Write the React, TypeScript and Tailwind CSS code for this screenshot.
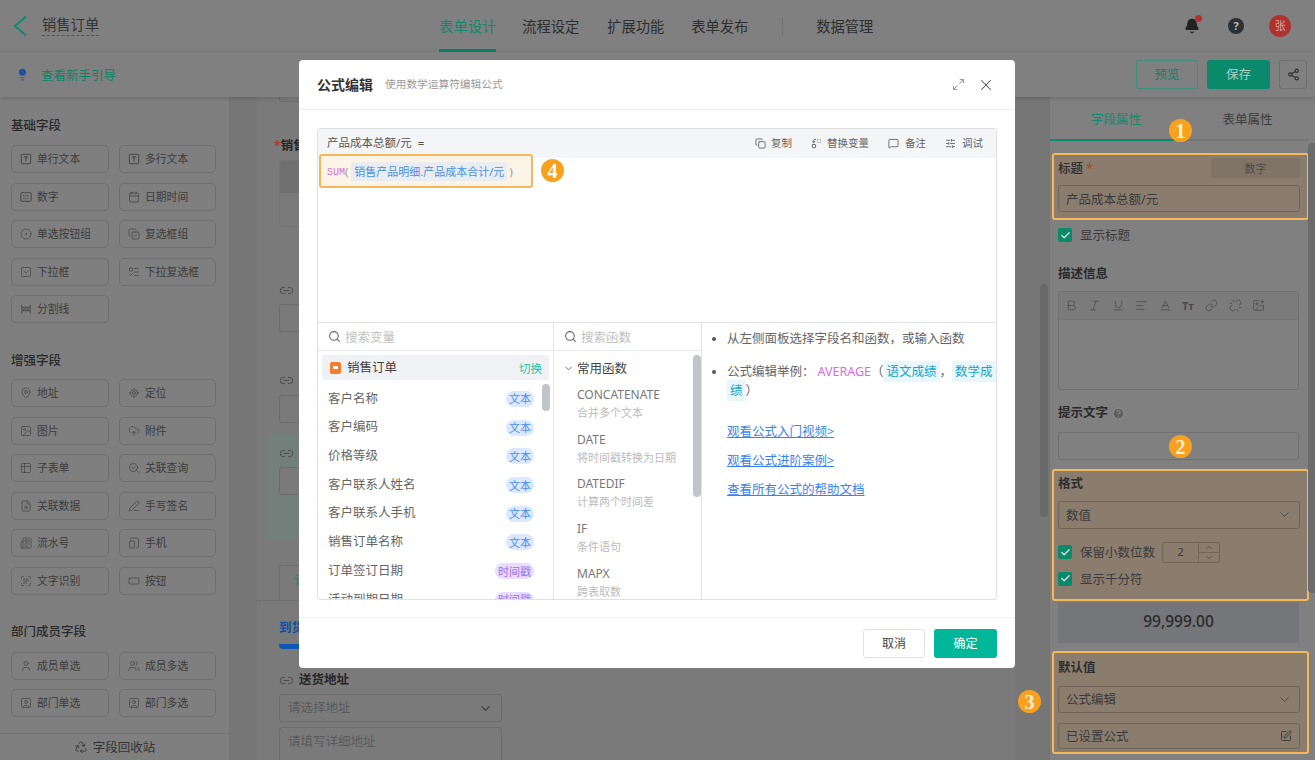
import {
  AlignLeft,
  Baseline,
  Bell,
  Bold,
  Calendar,
  Check,
  ChevronDown,
  ChevronUp,
  CircleDot,
  CircleHelp,
  CloudUpload,
  Copy,
  CopyCheck,
  FileSearch,
  Image,
  ImagePlus,
  Italic,
  Lightbulb,
  Link,
  Link2,
  ListTodo,
  LocateFixed,
  MapPin,
  Maximize2,
  MessageSquare,
  Newspaper,
  PenLine,
  Recycle,
  Replace,
  RectangleHorizontal,
  ScanText,
  Search,
  SearchCheck,
  Share2,
  SlidersHorizontal,
  SquareChevronDown,
  SquarePen,
  SquareUser,
  Table2,
  TabletSmartphone,
  Underline,
  Unlink,
  User,
  Users,
  X,
} from 'lucide-react'
import type { ReactNode } from 'react'

const TextBoxIcon = () => (
  <svg width="12" height="12" viewBox="0 0 14 14" fill="none" stroke="currentColor" strokeWidth="1.1">
    <rect x="1.5" y="1.5" width="11" height="11" rx="1" />
    <path d="M4.5 4.5h5M7 4.5v5.5" />
  </svg>
)

const NumberBoxIcon = () => (
  <svg width="12" height="12" viewBox="0 0 14 14" fill="none" stroke="currentColor" strokeWidth="1.1">
    <rect x="1" y="2" width="12" height="10" rx="1" />
    <path d="M3.5 5.5h7M3.5 8.5h7" strokeDasharray="1.5 1" />
  </svg>
)

const DividerIcon = () => (
  <svg width="12" height="12" viewBox="0 0 14 14" fill="none" stroke="currentColor" strokeWidth="1.1">
    <path d="M2 2v3h10V2M1 7h12M2 12V9h10v3" />
  </svg>
)

const sm = { size: 12, strokeWidth: 1.4 }
const tool = { size: 13, strokeWidth: 1.4 }

const basicFields: [string, ReactNode][] = [
  ['单行文本', <TextBoxIcon />],
  ['多行文本', <TextBoxIcon />],
  ['数字', <NumberBoxIcon />],
  ['日期时间', <Calendar {...sm} />],
  ['单选按钮组', <CircleDot {...sm} />],
  ['复选框组', <CopyCheck {...sm} />],
  ['下拉框', <SquareChevronDown {...sm} />],
  ['下拉复选框', <ListTodo {...sm} />],
  ['分割线', <DividerIcon />],
]

const advancedFields: [string, ReactNode][] = [
  ['地址', <MapPin {...sm} />],
  ['定位', <LocateFixed {...sm} />],
  ['图片', <Image {...sm} />],
  ['附件', <CloudUpload {...sm} />],
  ['子表单', <Table2 {...sm} />],
  ['关联查询', <SearchCheck {...sm} />],
  ['关联数据', <FileSearch {...sm} />],
  ['手写签名', <PenLine {...sm} />],
  ['流水号', <Newspaper {...sm} />],
  ['手机', <TabletSmartphone {...sm} />],
  ['文字识别', <ScanText {...sm} />],
  ['按钮', <RectangleHorizontal {...sm} />],
]

const memberFields: [string, ReactNode][] = [
  ['成员单选', <User {...sm} />],
  ['成员多选', <Users {...sm} />],
  ['部门单选', <SquareUser {...sm} />],
  ['部门多选', <SquareUser {...sm} />],
]

const variables = [
  ['客户名称', '文本'],
  ['客户编码', '文本'],
  ['价格等级', '文本'],
  ['客户联系人姓名', '文本'],
  ['客户联系人手机', '文本'],
  ['销售订单名称', '文本'],
  ['订单签订日期', '时间戳'],
  ['活动到期日期', '时间戳'],
]

const functions = [
  ['CONCATENATE', '合并多个文本'],
  ['DATE', '将时间戳转换为日期'],
  ['DATEDIF', '计算两个时间差'],
  ['IF', '条件语句'],
  ['MAPX', '跨表取数'],
]

const FieldGroup = ({ title, items, top, gap }: { title: string; items: [string, ReactNode][]; top: string; gap: string }) => (
  <div className={top}>
    <h3 className="h-4 text-[12.5px] leading-4 font-medium text-[#2a2a2a]">{title}</h3>
    <div className={`grid grid-cols-[98px_97px] gap-x-[10px] gap-y-[9.5px] ${gap}`}>
      {items.map(([label, icon]) => (
        <div key={label} className="flex h-[28px] items-center gap-[5px] rounded-[5px] border border-[#6f6f6f] pl-[8px] text-[10.8px] text-[#3c3c3c]">
          <span className="text-[#444]">{icon}</span>
          <span className="pt-[1px]">{label}</span>
        </div>
      ))}
    </div>
  </div>
)

const FormLabel = ({ text, className = '' }: { text: string; className?: string }) => (
  <div className={`flex h-[14px] items-center gap-[5px] text-[12.5px] font-bold text-[#262626] ${className}`}>
    <Link2 size={15} strokeWidth={1.6} className="text-[#4c4c4c]" />
    <span className="pt-[1px]">{text}</span>
  </div>
)

const PanelCheck = ({ label }: { label: string }) => (
  <div className="flex items-center gap-[8px] text-[12.5px] text-[#3a3a3a]">
    <span className="flex h-[14px] w-[14px] items-center justify-center rounded-[2px] bg-[#0b8a6b]">
      <Check size={11} strokeWidth={3} className="text-[#d9d9d9]" />
    </span>
    <span className="pt-[2px]">{label}</span>
  </div>
)

const Marker = ({ n, className }: { n: string; className: string }) => (
  <span className={`absolute z-10 flex h-[23px] w-[23px] items-center justify-center rounded-full bg-[#f7a11f] font-['Liberation_Serif',serif] text-[20px] font-bold text-[#fdeed6] ${className}`}>
    {n}
  </span>
)

const Spotlight = ({ className, children }: { className: string; children: ReactNode }) => (
  <div className={`ml-[2px] w-[257px] rounded-[3px] border-2 border-[#f4b75a] bg-[#8a7d6e] pl-[4px] pr-[7px] ${className}`}>{children}</div>
)

const dimInput = 'flex items-center rounded-[3px] border border-[#6f6659] pl-[7px] pr-[7px] pt-[3px] text-[12.5px] text-[#3a3a3a]'

const RightPanel = () => (
  <aside className="relative flex w-[266px] shrink-0 border-l border-[#737373] bg-[#808080]">
    <div className="w-[258px]">
      <div className="relative flex h-[44px] border-b-2 border-[#767676] text-[12.5px]">
        <div className="flex h-[44px] w-[126px] items-center justify-center border-b-2 border-[#0b8a6b] pl-[6px] pt-[4px] text-[#0f8a6d]">字段属性</div>
        <div className="flex h-[42px] flex-1 items-center justify-center pl-[11px] pt-[4px] text-[#3c3c3c]">表单属性</div>
      </div>

      <Spotlight className="mt-[12px] h-[67px] pt-[3px]">
        <div className="flex h-[20px] items-center justify-between text-[12.5px] font-medium text-[#2e2e2e]">
          <span className="pt-[2px]">
            标题 <span className="text-[#c0392b]">*</span>
          </span>
          <span className="flex h-[20px] w-[89px] items-center justify-center rounded-[2px] bg-[#807466] text-[11px] font-normal text-[#4a4a4a]">数字</span>
        </div>
        <div className={`mt-[7px] h-[27px] ${dimInput}`}>产品成本总额/元</div>
      </Spotlight>

      <div className="ml-[8px] mt-[8px]">
        <PanelCheck label="显示标题" />
        <div className="mt-[24px] h-[14px] text-[12.5px] font-bold leading-[14px] text-[#2a2a2a]">描述信息</div>
        <div className="mt-[10px] h-[99px] w-[241px] rounded-[3px] border border-[#707070]">
          <div className="flex h-[28px] items-center gap-[10.4px] border-b border-[#747474] bg-[#7b7b7b] pl-[6px] text-[#4a4a4a]">
            <Bold {...tool} />
            <Italic {...tool} />
            <Underline {...tool} />
            <AlignLeft {...tool} />
            <Baseline {...tool} />
            <span className="w-[13px] text-[11px] font-bold leading-[13px]">Tт</span>
            <Link {...tool} />
            <Unlink {...tool} />
            <ImagePlus {...tool} />
          </div>
        </div>
        <div className="mt-[17px] flex h-[14px] items-center gap-[4px] text-[12.5px] font-bold text-[#2a2a2a]">
          提示文字
          <CircleHelp size={13} fill="#5f5f5f" strokeWidth={2} className="text-[#8a8a8a]" />
        </div>
        <div className="mt-[11px] h-[28px] w-[241px] rounded-[3px] border border-[#707070]" />
      </div>

      <Spotlight className="mt-[9px] h-[132px] pt-[5px]">
        <div className="h-[14px] pt-[1px] text-[12.5px] font-bold leading-[14px] text-[#2e2e2e]">格式</div>
        <div className={`mt-[11px] h-[28px] justify-between ${dimInput}`}>
          数值
          <ChevronDown size={15} strokeWidth={1.5} className="-mt-[3px] text-[#4a4a4a]" />
        </div>
        <div className="mt-[13px] flex h-[21px] items-center">
          <PanelCheck label="保留小数位数" />
          <div className="ml-[7px] flex h-[21px] w-[58px] rounded-[3px] border border-[#6f6659] text-[11.5px] text-[#3a3a3a]">
            <span className="flex w-[35px] items-center justify-center">2</span>
            <span className="flex flex-1 flex-col items-center border-l border-[#6f6659] text-[#444]">
              <ChevronUp size={10} className="flex-1" />
              <span className="h-px w-full bg-[#6f6659]" />
              <ChevronDown size={10} className="flex-1" />
            </span>
          </div>
        </div>
        <div className="mt-[9px]">
          <PanelCheck label="显示千分符" />
        </div>
      </Spotlight>

      <div className="ml-[8px] mt-px flex h-[41px] w-[241px] items-center justify-center bg-[#747679] text-[15.5px] font-medium text-[#2a2a2a]">99,999.00</div>

      <Spotlight className="mt-[8px] h-[103px] pt-[7px]">
        <div className="h-[14px] pt-[1px] text-[12.5px] font-bold leading-[14px] text-[#2e2e2e]">默认值</div>
        <div className={`mt-[12px] h-[27px] justify-between ${dimInput}`}>
          公式编辑
          <ChevronDown size={15} strokeWidth={1.5} className="-mt-[3px] text-[#4a4a4a]" />
        </div>
        <div className={`mt-[10px] h-[26px] justify-between ${dimInput}`}>
          已设置公式
          <SquarePen size={12} className="-mt-[3px] text-[#3a3a3a]" />
        </div>
      </Spotlight>
    </div>
    <div className="ml-auto w-[7px] pt-[46px]">
      <div className="h-[450px] w-[7px] rounded-l-[4px] bg-[#6b6b6b]" />
    </div>
    <Marker n="1" className="left-[119px] top-[22px]" />
    <Marker n="2" className="left-[119px] top-[338px]" />
  </aside>
)

const Canvas = () => (
  <main className="flex min-w-0 flex-1 bg-[#767676]">
    <div className="ml-[27px] h-full w-[758px] overflow-hidden bg-[#7a7a7a] pl-[22px]">
      <div className="h-[5px] w-[700px] rounded-b-[3px] border-x border-b border-[#6c6c6c]" />
      <div className="mt-[37px] -ml-[5px] flex h-[14px] items-center text-[12.5px] font-bold text-[#262626]">
        <span className="text-[#b03a2e]">*</span>销售产品明细
      </div>
      <div className="mt-[7px] h-[67px] w-[700px] overflow-hidden rounded-[3px] border border-[#727272]">
        <div className="h-[32px] bg-[#6f6f6f]" />
      </div>
      <FormLabel text="销售产品" className="mt-[56px]" />
      <div className="mt-[7px] h-[28px] w-[300px] rounded-[3px] border border-[#6c6c6c]" />
      <FormLabel text="销售日期" className="mt-[41px]" />
      <div className="mt-[8px] h-[28px] w-[300px] rounded-[3px] border border-[#6c6c6c]" />
      <div className="-ml-[11px] mt-[10px] h-[107px] w-[700px] bg-[#727f7b] pl-[11px] pt-[13px]">
        <FormLabel text="产品成本" />
        <div className="mt-[7px] h-[28px] w-[300px] rounded-[3px] border border-[#6c6c6c] bg-[#7a7a7a]" />
      </div>
      <div className="-ml-[22px] mt-[25px] flex h-[36px] w-[758px] border-b border-[#6f6f6f]">
        <div className="ml-[22px] h-[36px] w-[100px] rounded-t-[3px] border-x border-t border-[#6f6f6f] pl-[14px] pt-[9px] text-[12.5px] text-[#0f8a6d]">详情</div>
      </div>
      <div className="mt-[20px] text-[12.5px] font-bold leading-[14px] text-[#0f4fa8]">到货信息</div>
      <div className="mt-[9px] h-[5px] w-[60px] rounded-b-[4px] bg-[#0f58b5]" />
      <FormLabel text="送货地址" className="mt-[24px]" />
      <div className="mt-[7px] flex h-[28px] w-[223px] items-center justify-between rounded-[3px] border border-[#6c6c6c] px-[8px] text-[12.5px] text-[#5a5a5a]">
        请选择地址
        <ChevronDown size={15} strokeWidth={2} className="text-[#3e3e3e]" />
      </div>
      <div className="mt-[5px] h-[60px] w-[223px] rounded-[3px] border border-[#6c6c6c] px-[8px] pt-[8px] text-[12.5px] text-[#5a5a5a]">请填写详细地址</div>
    </div>
    <div className="ml-auto w-[9px] pt-[187px]">
      <div className="h-[233px] w-[8px] rounded-[4px] bg-[#696969]" />
    </div>
  </main>
)

const FormulaModal = () => (
  <div className="absolute left-[299px] top-[60px] z-20 flex h-[608px] w-[716px] flex-col rounded-[4px] bg-white">
    <header className="flex h-[50px] shrink-0 items-center border-b border-[#eeeeee] pl-[18px] pr-[20px]">
      <h2 className="text-[14px] font-bold text-[#333]">公式编辑</h2>
      <span className="ml-[12px] text-[10.7px] text-[#9a9a9a]">使用数学运算符编辑公式</span>
      <Maximize2 size={13} strokeWidth={1.5} className="ml-auto text-[#777]" />
      <X size={18} strokeWidth={1.4} className="ml-[12px] text-[#555]" />
    </header>

    <div className="relative mx-[18px] mt-[18px] flex h-[472px] flex-col overflow-hidden rounded-[3px] border border-[#dfe0e2]">
      <div className="flex h-[29px] shrink-0 items-center justify-between bg-[#f4f5f7] pl-[9px] pr-[13px] text-[11.5px] text-[#555]">
        <span className="-mt-[1px]">产品成本总额/元&nbsp; =</span>
        <div className="flex text-[10.5px] text-[#666]">
          <span className="flex items-center gap-[5px]">
            <Copy size={11} />
            复制
          </span>
          <span className="ml-[19px] flex items-center gap-[5px]">
            <Replace size={11} />
            替换变量
          </span>
          <span className="ml-[19px] flex items-center gap-[6px]">
            <MessageSquare size={11} />
            备注
          </span>
          <span className="ml-[19px] flex items-center gap-[6px]">
            <SlidersHorizontal size={11} />
            调试
          </span>
        </div>
      </div>
      <div className="h-[165px] shrink-0 border-b border-[#e2e3e5]" />

      <div className="flex min-h-0 flex-1">
        <section className="relative w-[236px] shrink-0 overflow-hidden border-r border-[#e2e3e5]">
          <div className="flex h-[28px] items-center gap-[4px] border-b border-[#e8e9eb] pl-[10px] text-[12.5px] text-[#c0c0c0]">
            <Search size={13} className="text-[#666]" />
            <span className="pt-[3px]">搜索变量</span>
          </div>
          <div className="mx-[4px] mt-[4px] flex h-[25px] items-center rounded-[2px] bg-[#f0f1f5] pl-[8px] pr-[7px] text-[12.5px] text-[#444]">
            <span className="mr-[6px] flex h-[12px] w-[11px] items-center justify-center rounded-[2px] bg-[#f57c2c]">
              <span className="h-[3px] w-[5px] bg-white" />
            </span>
            <span className="pt-[2px]">销售订单</span>
            <span className="ml-auto pt-[2px] text-[11.5px] text-[#2cc29f]">切换</span>
          </div>
          <ul className="mt-[4.6px]">
            {variables.map(([name, type]) => (
              <li key={name} className="flex h-[28.7px] items-center justify-between pl-[10px] pr-[19px] text-[12.5px] text-[#666]">
                {name}
                <span
                  className={
                    type === '文本'
                      ? 'flex h-[16px] w-[28px] items-center justify-center rounded-full bg-[#dbe8ff] text-[11px] text-[#4a8cf0]'
                      : 'flex h-[16px] w-[39px] items-center justify-center rounded-full bg-[#e9dcff] text-[11px] text-[#9b6fe8]'
                  }
                >
                  {type}
                </span>
              </li>
            ))}
          </ul>
          <div className="absolute left-[224px] top-[61px] h-[27px] w-[8px] rounded-full bg-[#c1c4c8]" />
        </section>

        <section className="relative w-[148px] shrink-0 overflow-hidden border-r border-[#e2e3e5]">
          <div className="flex h-[28px] items-center gap-[4px] border-b border-[#e8e9eb] pl-[10px] text-[12.5px] text-[#c0c0c0]">
            <Search size={13} className="text-[#666]" />
            <span className="pt-[3px]">搜索函数</span>
          </div>
          <div className="mt-[4px] flex h-[26px] items-center gap-[3px] pl-[9px] text-[12.5px] text-[#444]">
            <ChevronDown size={11} className="text-[#666]" />
            <span className="pt-[2px]">常用函数</span>
          </div>
          <ul className="mt-[5px] pl-[23px]">
            {functions.map(([name, desc]) => (
              <li key={name} className="h-[44.7px]">
                <div className="h-[18px] text-[12px] leading-[18px] text-[#777]">{name}</div>
                <div className="h-[18px] text-[11px] leading-[18px] text-[#bbbbbb]">{desc}</div>
              </li>
            ))}
          </ul>
          <div className="absolute right-0 top-[32px] h-[142px] w-[8px] rounded-full bg-[#c1c4c8]" />
        </section>

        <section className="min-w-0 flex-1 pl-[25px] pt-[6px] text-[12.5px] text-[#666]">
          <ul className="list-disc marker:text-[#555]">
            <li className="leading-[19px]">从左侧面板选择字段名和函数，或输入函数</li>
            <li className="mt-[14px] leading-[19px]">
              公式编辑举例：
              <span className="ml-[3px] text-[#d66be8]">AVERAGE</span>
              <span>（</span>
              <span className="bg-[#e8f7fb] px-[3px] py-[2px] text-[#17a5c8]">语文成绩</span>，
              <span className="bg-[#e8f7fb] px-[3px] py-[2px] text-[#17a5c8] [box-decoration-break:clone]">数学成绩</span>）
            </li>
          </ul>
          <div className="mt-[23px] flex flex-col items-start gap-[11px] leading-[18px] text-[#3b82f0] underline">
            <span>观看公式入门视频&gt;</span>
            <span>观看公式进阶案例&gt;</span>
            <span>查看所有公式的帮助文档</span>
          </div>
        </section>
      </div>

      {/* formula highlight, sits over the editor header */}
      <div className="absolute left-px top-[25px] flex h-[34px] w-[214px] items-center rounded-[3px] border-2 border-[#f4b75a] bg-[#fdf3e7] pl-[6px] text-[11px]">
        <span className="pt-[3px] font-['Liberation_Mono',monospace] text-[10px] text-[#d96fd9]">SUM</span>
        <span className="text-[#999]">(</span>
        <span className="ml-[3px] rounded-[3px] bg-[#e9ecf1] px-[3px] py-[4px] text-[#4a90e2]">销售产品明细.产品成本合计/元</span>
        <span className="ml-[2px] text-[#999]">)</span>
      </div>
      <Marker n="4" className="left-[223px] top-[30px] !text-white" />
    </div>

    <footer className="mt-[17px] flex h-[51px] items-start justify-end gap-[9px] border-t border-[#f0f0f0] pr-[18px] pt-[11px] text-[12px]">
      <button className="h-[29px] w-[62px] rounded-[3px] border border-[#e2e2e2] pt-[1px] text-[#444]">取消</button>
      <button className="h-[29px] w-[63px] rounded-[3px] bg-[#00b899] pt-[1px] text-white">确定</button>
    </footer>
  </div>
)

export default function App() {
  return (
    <div className="relative flex h-[760px] w-[1315px] flex-col overflow-hidden bg-[#808080] font-['Noto_Sans','Noto_Sans_CJK_SC',sans-serif] leading-none">
      <header className="flex h-[52px] shrink-0 items-center border-b border-[#7a7a7a] pl-[13px]">
        <svg width="14" height="22" viewBox="0 0 14 22" fill="none" stroke="#0f8a6d" strokeWidth="2">
          <path d="M13 1.5 2 11l11 9.5" />
        </svg>
        <span className="ml-[15px] mt-[3px] border-b border-dashed border-[#555] pb-[2px] text-[14.3px] text-[#333]">销售订单</span>
        <nav className="ml-[340px] flex h-full items-center whitespace-nowrap pt-[3px] text-[14.3px] text-[#2e2e2e]">
          <span className="relative flex h-full w-[57px] items-center justify-center text-[#0f8a6d]">
            表单设计
            <span className="absolute -bottom-[1px] left-0 h-[3px] w-full bg-[#0b7d62]" />
          </span>
          <span className="ml-[26px] w-[58px]">流程设定</span>
          <span className="ml-[27px] w-[57px]">扩展功能</span>
          <span className="ml-[27px] w-[57px]">表单发布</span>
          <span className="ml-[34px] h-[18px] w-px bg-[#707070]" />
          <span className="ml-[33px] w-[58px]">数据管理</span>
        </nav>
        <div className="relative ml-[310px]">
          <Bell size={16} fill="#222" className="text-[#222]" />
          <span className="absolute -right-[2px] -top-[3px] h-[7px] w-[7px] rounded-full bg-[#b5302c]" />
        </div>
        <span className="ml-[28px] flex h-[16px] w-[16px] items-center justify-center rounded-full bg-[#2b2f36] text-[11px] font-bold text-[#bbb]">?</span>
        <span className="ml-[25px] flex h-[22px] w-[22px] items-center justify-center rounded-full bg-[#b0322f] text-[11px] text-[#d9a5a3]">张</span>
      </header>

      <div className="z-[1] flex h-[45px] shrink-0 items-center pl-[16px] pr-[8px] shadow-[0_2px_3px_rgba(0,0,0,0.12)]">
        <Lightbulb size={13} fill="#1d4fa3" strokeWidth={1.5} className="text-[#1d4fa3]" />
        <span className="ml-[12px] pt-[3px] text-[12.5px] text-[#0c8265]">查看新手引导</span>
        <button className="ml-auto h-[29px] w-[62px] rounded-[3px] border border-[#3f8f7c] pt-[2px] text-[12.5px] text-[#0c8265]">预览</button>
        <button className="ml-[9px] h-[29px] w-[63px] rounded-[3px] bg-[#0b8a6b] pt-[2px] text-[12.5px] text-[#a8d0c6]">保存</button>
        <button className="ml-[9px] flex h-[29px] w-[28px] items-center justify-center rounded-[3px] border border-[#707070] text-[#2e2e2e]">
          <Share2 size={13} />
        </button>
      </div>

      <div className="flex min-h-0 flex-1">
        <aside className="flex w-[230px] shrink-0 flex-col border-r border-[#737373] bg-[#7f7f7f]">
          <div className="min-h-0 flex-1 overflow-hidden px-[11px] pt-[21px]">
            <FieldGroup title="基础字段" items={basicFields} top="" gap="mt-[11px]" />
            <FieldGroup title="增强字段" items={advancedFields} top="mt-[30px]" gap="mt-[10px]" />
            <FieldGroup title="部门成员字段" items={memberFields} top="mt-[29px]" gap="mt-[12px]" />
          </div>
          <div className="flex h-[27px] shrink-0 items-center justify-center gap-[5px] border-t border-[#737373] text-[12.5px] text-[#333]">
            <Recycle size={14} strokeWidth={1.4} />
            <span className="pt-[3px]">字段回收站</span>
          </div>
        </aside>
        <Canvas />
        <RightPanel />
      </div>

      <Marker n="3" className="left-[1018px] top-[690px]" />
      <FormulaModal />
    </div>
  )
}
